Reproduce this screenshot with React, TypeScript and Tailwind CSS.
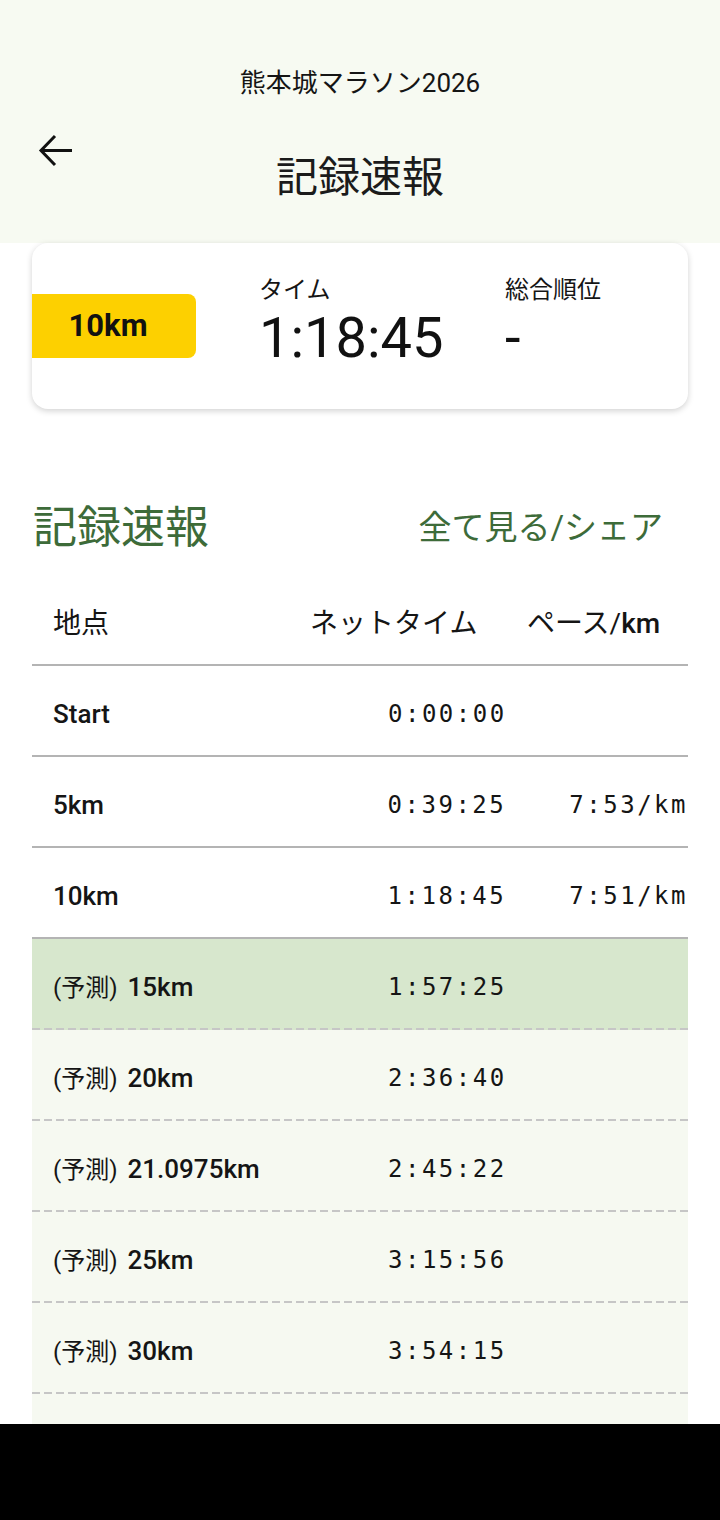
import React from 'react';

const sans = "font-['Roboto','Noto_Sans_CJK_JP',sans-serif]";
const mono = "font-['DejaVu_Sans_Mono',monospace] tracking-[2.5px]";

type Split = {
  label: string;
  predicted?: boolean;
  time: string;
  pace?: string;
  highlight?: boolean;
};

const splits: Split[] = [
  { label: 'Start', time: '0:00:00' },
  { label: '5km', time: '0:39:25', pace: '7:53/km' },
  { label: '10km', time: '1:18:45', pace: '7:51/km' },
  { label: '15km', predicted: true, time: '1:57:25', highlight: true },
  { label: '20km', predicted: true, time: '2:36:40' },
  { label: '21.0975km', predicted: true, time: '2:45:22' },
  { label: '25km', predicted: true, time: '3:15:56' },
  { label: '30km', predicted: true, time: '3:54:15' },
];

function BackArrow() {
  return (
    <svg width="40" height="40" viewBox="0 0 40 40" fill="none">
      <path d="M5 20.5H36" stroke="#111" strokeWidth="3" />
      <path d="M19 6L5 20.5L19 35" stroke="#111" strokeWidth="3" />
    </svg>
  );
}

function DashedLine() {
  return (
    <div className="h-[2px] w-full bg-[repeating-linear-gradient(90deg,#c6c6c6_0px,#c6c6c6_8px,transparent_8px,transparent_12px)]" />
  );
}

function SplitRow({ split, dashed }: { split: Split; dashed: boolean }) {
  const bg = split.highlight ? 'bg-[#d7e7cd]' : split.predicted ? 'bg-[#f6f9f1]' : 'bg-white';
  return (
    <div className={bg}>
      <div className="flex h-[89px] items-center pl-[21px] pt-[7px] text-[#151515]">
        <div className="w-[335px] whitespace-nowrap">
          {split.predicted && <span className="mr-[4px] text-[24px]">(予測) </span>}
          <span className="text-[26px] font-medium">{split.label}</span>
        </div>
        <div className={`w-[182px] text-[24px] ${mono}`}>{split.time}</div>
        <div className={`whitespace-nowrap text-[24px] ${mono}`}>{split.pace ?? ''}</div>
      </div>
      {dashed ? <DashedLine /> : <div className="h-[2px] bg-[#b4b4b4]" />}
    </div>
  );
}

export default function App() {
  return (
    <div className={`flex h-[1520px] w-[720px] flex-col overflow-hidden bg-white ${sans}`}>
      <div className="h-[1424px] overflow-hidden">
        {/* Header */}
        <div className="h-[243px] bg-[#f7faf2] pt-[68px]">
          <div className="text-center text-[26px] leading-[30px] text-[#151515]">熊本城マラソン2026</div>
          <div className="mt-[32px] grid grid-cols-[80px_1fr_80px]">
            <div className="pl-[36px]">
              <BackArrow />
            </div>
            <div className="pt-[3px] text-center text-[42px] leading-[90px] text-[#1b1b1b]">記録速報</div>
            <div />
          </div>
        </div>

        {/* Summary card */}
        <div className="mx-[32px] flex h-[166px] items-center rounded-2xl bg-white shadow-[0_2px_6px_rgba(0,0,0,0.18)]">
          <div className="flex h-[64px] w-[164px] items-center justify-center rounded-r-lg bg-[#fdd000] pr-[12px] text-[31px] font-bold text-[#111]">
            10km
          </div>
          <div className="ml-[63px] flex w-[246px] flex-col">
            <div className="-mt-[4px] text-[24px] leading-[24px] text-[#151515]">タイム</div>
            <div className="mt-[4px] text-[56px] leading-[64px] text-[#111]">1:18:45</div>
          </div>
          <div className="flex flex-col">
            <div className="-mt-[4px] text-[24px] leading-[24px] text-[#151515]">総合順位</div>
            <div className="mt-[4px] text-[56px] leading-[64px] text-[#111]">-</div>
          </div>
        </div>

        {/* Section heading */}
        <div className="mx-[32px] mt-[89px] flex h-[60px] items-center justify-between pl-[1px] pr-[25px] text-[#3d6b39]">
          <div className="text-[44px]">記録速報</div>
          <div className="text-[33px]">全て見る/シェア</div>
        </div>

        {/* Table */}
        <div className="mx-[32px]">
          <div className="flex h-[106px] items-center pl-[21px] pt-[26px] text-[28px] text-[#151515]">
            <div className="w-[257px]">地点</div>
            <div className="w-[217px]">ネットタイム</div>
            <div className="whitespace-nowrap">
              ペース/<span className="font-medium">km</span>
            </div>
          </div>
          <div className="h-[2px] bg-[#b4b4b4]" />
          {splits.map((s) => (
            <SplitRow key={s.label} split={s} dashed={s.predicted === true} />
          ))}
          <div className="h-[89px] bg-[#f6f9f1]" />
        </div>
      </div>
      <div className="h-[96px] bg-black" />
    </div>
  );
}
